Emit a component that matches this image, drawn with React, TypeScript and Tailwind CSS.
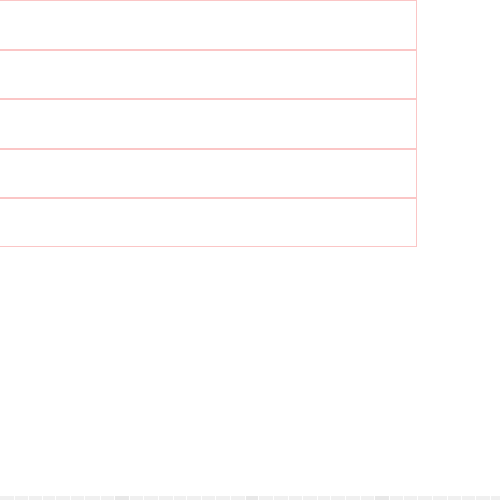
import React from "react";

const widths = [14, 13, 14, 12, 14, 13, 15, 14, 14, 13, 14, 14, 13, 14, 13, 14, 14, 13, 14, 14, 13, 14, 13, 14, 14, 13, 14, 14, 13, 14, 14, 13, 14, 14, 9];

export default function App() {
  return (
    <div className="w-[500px] h-[500px] bg-white overflow-hidden flex flex-col justify-between font-['Liberation_Sans',sans-serif]">
      <div className="w-[419px] -ml-[2px] flex flex-col">
        <div className="h-[50px] border border-[#fbc6c6] bg-white" />
        <div className="h-[49px] border border-[#fbc6c6] bg-white" />
        <div className="h-[50px] border border-[#fbc6c6] bg-white" />
        <div className="h-[49px] border border-[#fbc6c6] bg-white" />
        <div className="h-[49px] border border-[#fbc6c6] bg-white" />
      </div>
      <div className="flex gap-px h-[4px]">
        {widths.map((w, i) => (
          <div
            key={i}
            className={i % 9 === 8 ? "h-full bg-[#e8e8e8]" : "h-full bg-[#f0f0f0]"}
            style={{ width: w }}
          />
        ))}
      </div>
    </div>
  );
}
